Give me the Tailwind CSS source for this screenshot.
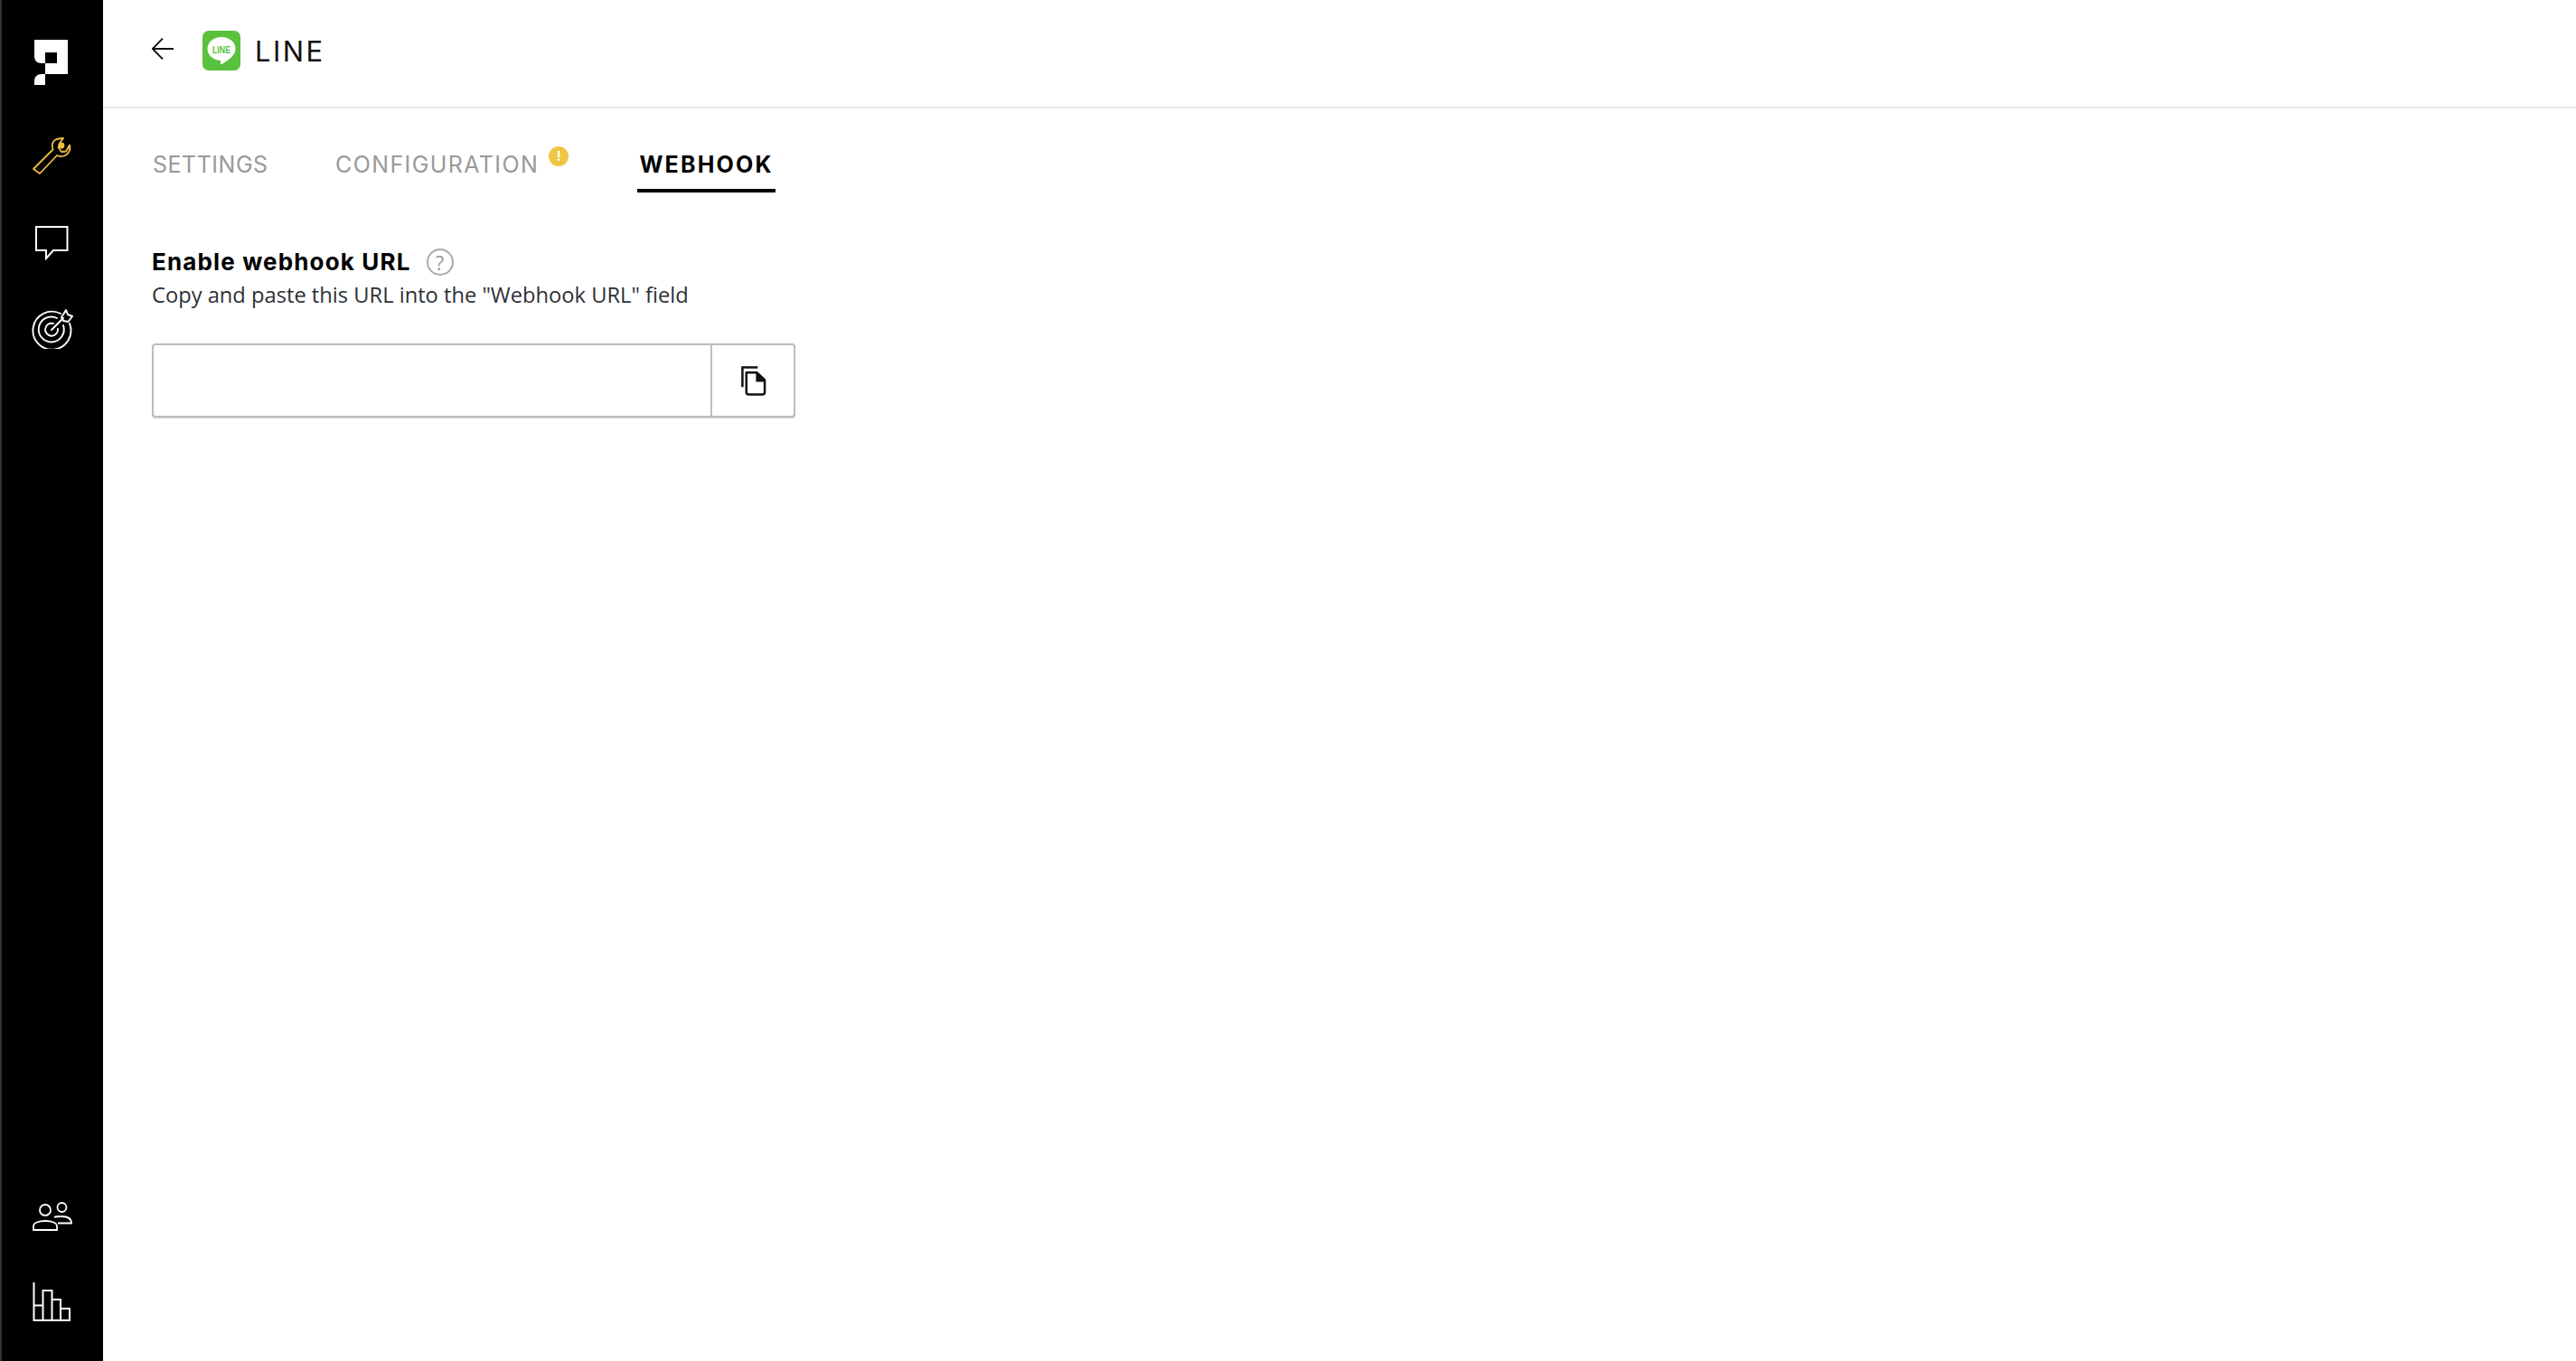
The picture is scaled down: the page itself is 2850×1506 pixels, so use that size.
<!DOCTYPE html>
<html lang="en">
<head>
    <meta charset="UTF-8">
    <title>LINE - Webhook</title>
    <script src="https://cdn.jsdelivr.net/npm/@tailwindcss/browser@4"></script>
</head>
<body class="bg-white font-['Open_Sans',sans-serif]">
    <div class="flex h-[1506px] w-[2850px] overflow-hidden">
        <!-- Sidebar -->
        <aside class="flex w-[114px] shrink-0 flex-col border-l-2 border-[#333] bg-black pr-[2px] pt-[44px] pb-[43px] pl-0">
            <svg class="ml-[36px] block" width="38" height="50" viewBox="38 44 38 50">
                <path fill="#fff" fill-rule="evenodd" d="M38 44H75V82H50V70H46C41 70 38 67 38 62ZM50 58V70H63V58Z"/>
                <path fill="#fff" d="M50 82V94H38V90C38 85 41 82 46 82Z"/>
            </svg>
            <svg class="ml-[34px] mt-[58px] block" width="44" height="41" viewBox="36 152 44 41">
                <path fill="none" stroke="#eebd3c" stroke-width="1.8" stroke-linejoin="round" d="M37 187L58.5 165.5C56 157 60 153 70 153L66 158.5L64.5 163L68 168L73 167.5L77 160.5C79 168 72 176 63 172L44 192Z"/>
                <circle cx="68" cy="161" r="3.4" fill="#eebd3c"/>
            </svg>
            <svg class="ml-[36px] mt-[57px] block" width="38" height="38" viewBox="37 250 38 38">
                <path fill="none" stroke="#fff" stroke-width="2" d="M39 251H73.5V277H58L50 286V277H39Z"/>
            </svg>
            <svg class="ml-[33px] mt-[54px] block" width="46" height="44" viewBox="34 342 46 44">
                <g fill="none" stroke="#fff" stroke-width="1.9" stroke-linecap="round">
                    <path d="M66 347A21 21 0 1 0 76 358"/>
                    <path d="M62 352A14 14 0 1 0 69 360"/>
                    <path d="M58 358A7 7 0 1 0 63 364"/>
                    <path d="M56 365L69 352"/>
                    <path stroke-linejoin="round" d="M69 348L72 343L74 348L79 350L74.500 356L69 355L67 351Z"/>
                </g>
            </svg>
            <svg class="ml-[34px] mt-auto block" width="45" height="33" viewBox="36 1329 45 33">
                <g fill="none" stroke="#fff" stroke-width="1.800">
                    <circle cx="50" cy="1338" r="6"/>
                    <circle cx="68.500" cy="1335" r="5"/>
                    <path d="M37 1360V1356C37 1352 43 1350 50 1350C57 1350 63 1352 63 1356V1360Z"/>
                    <path d="M60 1346C62 1345 65 1345 68 1345C74 1345 79 1347 79 1352.500H64"/>
                </g>
            </svg>
            <svg class="ml-[34px] mt-[56px] block" width="43" height="44" viewBox="36 1418 43 44">
                <path fill="none" stroke="#fff" stroke-width="2" d="M37.500 1418V1460H77V1447H67V1460M67 1447V1437H57.500V1460M57.500 1437V1427H47.500V1460M47.500 1443.500H37.500"/>
            </svg>
        </aside>

        <main class="flex-1">
            <!-- Header -->
            <header class="flex h-[120px] items-center border-b-2 border-[#e8e8e8] pb-[6px] pl-[54px]">
                <svg class="mb-[4px]" width="24" height="24" viewBox="0 0 24 24" fill="none" stroke="#111" stroke-width="1.800">
                    <path d="M24 12H1M12 0.500L0.800 12L12 23.500"/>
                </svg>
                <svg class="ml-[32px]" width="42" height="44" viewBox="0 0 42 44">
                    <rect width="42" height="44" rx="7" fill="#5ac13c"/>
                    <path fill="#fff" d="M21 7C29.800 7 36.500 12.700 36.500 20C36.500 27.500 28 33 21.500 37C21 37.300 20 37.300 20 36L20.200 33C11.700 32.500 5.500 27 5.500 20C5.500 12.700 12.200 7 21 7Z"/>
                    <text x="21" y="24.500" text-anchor="middle" font-family="'Liberation Sans',sans-serif" font-size="11" font-weight="700" fill="#5ac13c" textLength="20" lengthAdjust="spacingAndGlyphs">LINE</text>
                </svg>
                <span class="ml-[16px] font-['Inter',sans-serif] text-[31px] leading-none tracking-[2.4px] text-[#111]">LINE</span>
            </header>

            <!-- Tabs -->
            <nav class="flex items-start pl-[53px] pt-[47px] font-['Inter',sans-serif] text-[25px] leading-[30px]">
                <a class="h-[46px] w-[131px] pl-[2px] tracking-[0.5px] text-[#999]">SETTINGS</a>
                <a class="relative ml-[73px] h-[46px] w-[226px] tracking-[1.4px] whitespace-nowrap text-[#999]">CONFIGURATION
                    <span class="absolute left-[236px] top-[-5px] flex h-[22px] w-[22px] items-center justify-center rounded-full bg-[#eec643] text-[14px] leading-none font-bold tracking-normal text-white">!</span>
                </a>
                <a class="ml-[108px] h-[46px] w-[153px] border-b-4 border-black text-center font-bold tracking-[2.2px] text-black">WEBHOOK</a>
            </nav>

            <!-- Webhook URL -->
            <section class="pl-[54px] pt-[60px]">
                <div class="flex items-center">
                    <h2 class="font-['Inter',sans-serif] text-[26px] leading-[34px] font-bold tracking-[1.15px] text-black">Enable webhook URL</h2>
                    <span class="ml-[17px] flex h-[30px] w-[30px] items-center justify-center rounded-full border-2 border-[#aaa] text-[22px] leading-none text-[#999]">?</span>
                </div>
                <p class="mt-[1px] text-[23.7px] leading-[36px] text-[#2d3036]">Copy and paste this URL into the "Webhook URL" field</p>
                <div class="mt-[36px] flex h-[82px] w-[712px] rounded-[4px] border-2 border-[#bdbdbd] bg-white shadow-[0_1px_1px_rgba(0,0,0,0.2)]">
                    <div class="flex-1 border-r-2 border-[#bdbdbd]"></div>
                    <div class="flex w-[90px] items-center justify-center">
                        <svg width="29" height="33" viewBox="0 0 30 34" fill="none" stroke="#111" stroke-width="2.600">
                            <path d="M20 1.500H2.500V24"/>
                            <path stroke-linejoin="round" d="M7 7.500H19L28 16V30C28 31.500 27 32.500 25.500 32.500H9.500C8 32.500 7 31.500 7 30Z"/>
                            <path fill="#111" stroke="none" d="M18 7H20L28.500 15.500V18H18Z"/>
                        </svg>
                    </div>
                </div>
            </section>
        </main>
    </div>
</body>
</html>
